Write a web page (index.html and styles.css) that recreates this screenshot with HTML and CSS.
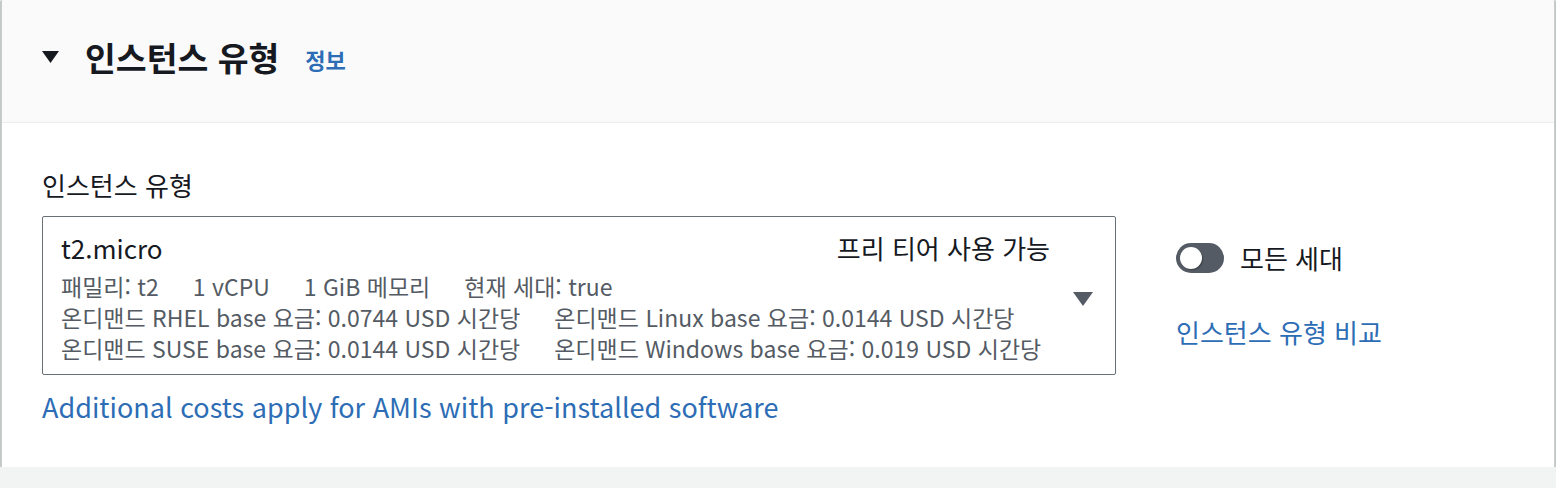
FILE: index.html
```html
<!DOCTYPE html>
<html lang="ko">
<head>
<meta charset="utf-8">
<link rel="stylesheet" href="styles.css">
</head>
<body>
<div class="page">
  <section class="card">
    <header class="card-header">
      <svg class="caret-title" width="17" height="12" viewBox="0 0 17 12"><path d="M0 0H17L8.5 12Z" fill="#16191f"/></svg>
      <h2 class="title">인스턴스 유형</h2>
      <a class="info">정보</a>
    </header>
    <div class="card-body">
      <div class="main-col">
        <div class="label">인스턴스 유형</div>
        <div class="select">
          <div class="select-content">
            <div class="row-top">
              <span class="type-name">t2.micro</span>
              <span class="tag">프리 티어 사용 가능</span>
            </div>
            <div class="meta">
              <span>패밀리: t2</span><span>1 vCPU</span><span>1 GiB 메모리</span><span>현재 세대: true</span>
            </div>
            <div class="meta">
              <span>온디맨드 RHEL base 요금: 0.0744 USD 시간당</span><span>온디맨드 Linux base 요금: 0.0144 USD 시간당</span>
            </div>
            <div class="meta">
              <span>온디맨드 SUSE base 요금: 0.0144 USD 시간당</span><span>온디맨드 Windows base 요금: 0.019 USD 시간당</span>
            </div>
          </div>
          <svg class="caret-select" width="20" height="14" viewBox="0 0 20 14"><path d="M0 0H20L10 14Z" fill="#545b64"/></svg>
        </div>
        <a class="link extra">Additional costs apply for AMIs with pre-installed software</a>
      </div>
      <div class="side-col">
        <label class="toggle-row">
          <span class="toggle"><span class="knob"></span></span>
          <span class="toggle-label">모든 세대</span>
        </label>
        <a class="link compare">인스턴스 유형 비교</a>
      </div>
    </div>
  </section>
</div>
</body>
</html>
```

FILE: styles.css
```css
* { box-sizing: border-box; }
html, body { margin: 0; padding: 0; }
body {
  background: #f2f3f3;
  font-family: "Noto Sans CJK KR", "Noto Sans", sans-serif;
  color: #16191f;
}
.page {
  padding: 0 1px 0 1px;
}
.card {
  background: #fff;
  border-left: 1px solid #c8cccc;
  border-right: 1px solid #c8cccc;
  box-shadow: 0 1px 1px 0 rgba(0, 28, 36, 0.3), 1px 1px 1px 0 rgba(0, 28, 36, 0.15), -1px 1px 1px 0 rgba(0, 28, 36, 0.15);
}
.card-header {
  height: 123px;
  background: #fafafa;
  border-bottom: 1px solid #eaeded;
  display: flex;
  align-items: center;
  padding: 0 0 8px 40px;
}
.caret-title { margin-right: 26px; }
.title {
  margin: 0;
  font-size: 33.5px;
  font-weight: 700;
  line-height: 40px;
}
.info {
  margin-left: 26px;
  color: #2d6db5;
  font-size: 22px;
  font-weight: 700;
  margin-top: 4px;
}
.card-body {
  display: flex;
  padding: 47px 40px 45px 40px;
  gap: 60px;
}
.main-col { width: 1074px; flex: none; }
.label {
  font-size: 26px;
  line-height: 30px;
  margin-bottom: 16px;
}
.select {
  border: 1px solid #687078;
  border-radius: 2px;
  display: flex;
  align-items: center;
  padding: 16px 22px 10px 18px;
}
.select-content { flex: 1; }
.row-top {
  display: flex;
  justify-content: space-between;
  align-items: center;
  padding-right: 15px;
  margin-bottom: 8px;
}
.type-name { font-size: 26px; line-height: 30px; }
.tag { font-size: 26px; line-height: 30px; }
.meta {
  display: flex;
  gap: 34px;
  font-size: 23px;
  line-height: 31px;
  color: #545b64;
}
.caret-select { margin-left: 8px; }
.link {
  color: #2d6db5;
  text-decoration: none;
}
.extra {
  display: block;
  margin-top: 17px;
  font-size: 27px;
  line-height: 30px;
}
.side-col {
  padding-top: 73px;
  display: flex;
  flex-direction: column;
}
.toggle-row {
  display: flex;
  align-items: center;
  gap: 16px;
}
.toggle {
  width: 48px;
  height: 30px;
  border-radius: 15px;
  background: #545b64;
  display: flex;
  align-items: center;
  padding: 0 4px;
}
.knob {
  width: 22px;
  height: 22px;
  border-radius: 50%;
  background: #fff;
  box-shadow: 1px 1px 1px rgba(0,0,0,0.3);
}
.toggle-label { font-size: 26px; line-height: 30px; }
.compare {
  margin-top: 44px;
  font-size: 26px;
  line-height: 30px;
}
```
